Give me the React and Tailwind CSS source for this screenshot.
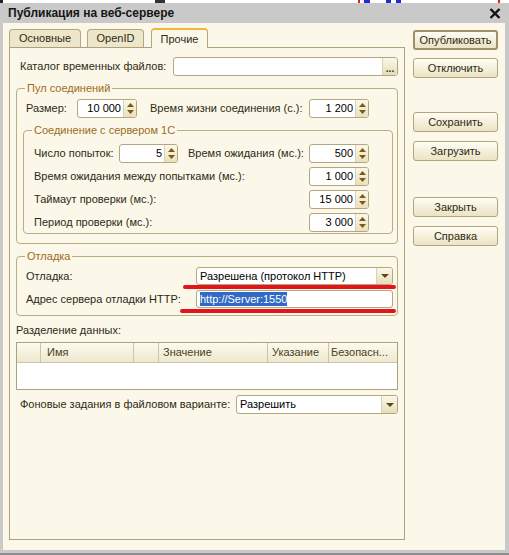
import React from "react";

const font = "font-['Liberation_Sans',Arial,sans-serif]";

function Up() {
  return (
    <svg width="7" height="4" viewBox="0 0 7 4"><path d="M0 4L3.5 0L7 4Z" fill="#7a5a14" /></svg>
  );
}
function Down() {
  return (
    <svg width="7" height="4" viewBox="0 0 7 4"><path d="M0 0L3.5 4L7 0Z" fill="#7a5a14" /></svg>
  );
}

function Spin({ value, w = "w-[60px]" }) {
  return (
    <div className={`${w} h-[19px] flex border border-[#b4a67d] rounded-[3px] bg-white overflow-hidden shrink-0`}>
      <div className="flex-1 text-right pr-[2px] leading-[17px] text-black">{value}</div>
      <div className="w-[13px] flex flex-col items-center justify-center gap-[3px] bg-gradient-to-b from-[#fbf8ea] to-[#e9e0bf] border-l border-[#ddd2ad]">
        <Up />
        <Down />
      </div>
    </div>
  );
}

function Select({ value, w, h = "h-[19px]", selected = false, arrow = true }) {
  return (
    <div className={`${w} ${h} flex border border-[#b4a67d] rounded-[3px] bg-white overflow-hidden shrink-0`}>
      <div className="flex-1 pl-[3px] flex items-center text-black">
        {selected ? (
          <span className="bg-[#316ac5] text-white leading-[14px]">{value}</span>
        ) : (
          <span>{value}</span>
        )}
      </div>
      {arrow && (
        <div className="w-[16px] flex items-center justify-center bg-gradient-to-b from-[#fbf8ea] to-[#e6ddbb] border-l border-[#ddd2ad]">
          <svg width="8" height="4" viewBox="0 0 8 4"><path d="M0 0L4 4L8 0Z" fill="#5e4914" /></svg>
        </div>
      )}
    </div>
  );
}

function Btn({ children, cls = "", def = false }) {
  return (
    <div
      className={`h-[20px] w-[85px] flex items-center justify-center rounded-[3px] bg-gradient-to-b from-[#fffdf4] to-[#ebe3c4] text-[#2d2a14] ${
        def ? "border-2 border-[#9e9168]" : "border border-[#b4a67b]"
      } ${cls}`}
    >
      {children}
    </div>
  );
}

export default function App() {
  return (
    <div className={`w-[509px] h-[555px] bg-white flex flex-col text-[11px] ${font}`}>
      <div className="h-[3px] flex shrink-0">
        <div className="w-[3px] bg-[#222]" />
        <div className="w-[152px]" />
        <div className="w-[10px] bg-[#333]" />
        <div className="w-[193px]" />
        <div className="w-[2px] bg-[#e02020]" />
        <div className="w-[4px]" />
        <div className="w-[6px] bg-[#2030d0]" />
        <div className="w-[16px]" />
        <div className="w-[5px] bg-[#2030d0]" />
        <div className="w-[5px]" />
        <div className="w-[5px] bg-[#2030d0]" />
        <div className="w-[97px]" />
        <div className="w-[2px] bg-[#e02020]" />
      </div>
      <div className="flex-1 flex flex-col bg-[#c9c9c9] border-b-2 border-[#8e8e8e] pl-[3px] pr-[4px] pb-[3px]">
        <div className="h-[20px] flex items-center justify-between pl-[5px] pr-[4px] shrink-0">
          <span className="font-bold text-[12px] text-[#151515]">Публикация на веб-сервере</span>
          <svg width="12" height="11" viewBox="0 0 12 11">
            <path d="M1.5 1L10.5 10M10.5 1L1.5 10" stroke="#111" strokeWidth="2.4" />
          </svg>
        </div>
        <div className="flex-1 bg-[#fbf8e9] flex text-[#2d2a14]">
          {/* left column */}
          <div className="w-[396px] ml-[6px] mt-[5px] mb-[10px] flex flex-col">
            <div className="h-[19px] flex items-end shrink-0">
              <div className="h-[18px] w-[72px] flex items-center justify-center border border-b-0 border-[#b4a67d] rounded-t-[4px] bg-[#ede6cb]">
                Основные
              </div>
              <div className="h-[18px] w-[57px] ml-[6px] flex items-center justify-center border border-b-0 border-[#b4a67d] rounded-t-[4px] bg-[#ede6cb]">
                OpenID
              </div>
              <div className="h-[20px] w-[57px] ml-[7px] -mb-px relative z-10 flex items-center justify-center border border-b-0 border-[#b4a67d] border-t-2 border-t-[#f2b540] rounded-t-[4px] bg-[#fbf8e9]">
                Прочие
              </div>
            </div>
            <div className="flex-1 border border-[#aca17b] bg-[#fbf8e9] px-[6px] pt-[9px] flex flex-col">
              {/* catalog */}
              <div className="flex items-center">
                <div className="w-[157px] pl-[4px]">Каталог временных файлов:</div>
                <div className="w-[225px] h-[19px] flex border border-[#b4a67d] rounded-[3px] bg-white overflow-hidden">
                  <div className="flex-1" />
                  <div className="w-[15px] flex items-end justify-center pb-[3px] bg-gradient-to-b from-[#fbf8ea] to-[#e6ddbb] border-l border-[#ddd2ad] text-[#333] leading-[6px] font-bold text-[10px]">
                    ...
                  </div>
                </div>
              </div>

              {/* Pool */}
              <fieldset className="mt-[5px] border border-[#b8ad86] rounded-[4px] pl-[9px] pr-[4px] pt-[4px] pb-[9px]">
                <legend className="ml-[-1px] px-[2px] leading-[14px] text-[#9e6b1c]">Пул соединений</legend>
                <div className="flex items-center">
                  <div className="w-[51px]">Размер:</div>
                  <Spin value="10 000" />
                  <div className="w-[159px] ml-[13px]">Время жизни соединения (с.):</div>
                  <Spin value="1 200" />
                </div>
                <fieldset className="mt-[5px] ml-[-3px] border border-[#b8ad86] rounded-[4px] pl-[10px] pt-[7px] pb-[1px]">
                  <legend className="ml-[-2px] px-[2px] leading-[14px] text-[#9e6b1c]">Соединение с сервером 1С</legend>
                  <div className="flex flex-col gap-[4px]">
                    <div className="flex items-center">
                      <div className="w-[85px]">Число попыток:</div>
                      <Spin value="5" w="w-[59px]" />
                      <div className="w-[131px] pl-[10px]">Время ожидания (мс.):</div>
                      <Spin value="500" />
                    </div>
                    <div className="flex items-center">
                      <div className="w-[275px]">Время ожидания между попытками (мс.):</div>
                      <Spin value="1 000" />
                    </div>
                    <div className="flex items-center">
                      <div className="w-[275px]">Таймаут проверки (мс.):</div>
                      <Spin value="15 000" />
                    </div>
                    <div className="flex items-center">
                      <div className="w-[275px]">Период проверки (мс.):</div>
                      <Spin value="3 000" />
                    </div>
                  </div>
                </fieldset>
              </fieldset>

              {/* Debug */}
              <fieldset className="relative mt-[5px] border border-[#b8ad86] rounded-[4px] pl-[9px] pt-[4px] pb-[7px]">
                <legend className="ml-[-1px] px-[2px] leading-[14px] text-[#9e6b1c]">Отладка</legend>
                <div className="flex flex-col gap-[5px]">
                  <div className="flex items-center">
                    <div className="w-[170px]">Отладка:</div>
                    <Select value="Разрешена (протокол HTTP)" w="w-[197px]" h="h-[18px]" />
                  </div>
                  <div className="flex items-center">
                    <div className="w-[170px]">Адрес сервера отладки HTTP:</div>
                    <Select value="http://Server:1550" w="w-[197px]" h="h-[18px]" selected arrow={false} />
                  </div>
                </div>
                <div className="absolute left-[166px] top-[22px] w-[213px] h-[4px] rounded-full bg-[#e3141b]" />
                <div className="absolute left-[163px] top-[46px] w-[216px] h-[4px] rounded-full bg-[#e3141b]" />
              </fieldset>

              <div className="mt-[7px] leading-[14px]">Разделение данных:</div>
              <div className="mt-[5px] h-[48px] border border-[#aca17b] bg-white flex flex-col">
                <div className="h-[20px] flex border-b border-[#cfc5a0] bg-gradient-to-b from-[#fcfaf0] to-[#efe8cf] text-[#4a4020]">
                  <div className="w-[24px] border-r border-[#cfc5a0]" />
                  <div className="w-[93px] border-r border-[#cfc5a0] pl-[6px] flex items-center">Имя</div>
                  <div className="w-[25px] border-r border-[#cfc5a0]" />
                  <div className="w-[109px] border-r border-[#cfc5a0] pl-[4px] flex items-center">Значение</div>
                  <div className="w-[61px] border-r border-[#cfc5a0] pl-[4px] flex items-center">Указание</div>
                  <div className="flex-1 pl-[2px] flex items-center">Безопасн...</div>
                </div>
              </div>

              <div className="mt-[5px] flex items-center">
                <div className="w-[220px] pl-[4px]">Фоновые задания в файловом варианте:</div>
                <Select value="Разрешить" w="w-[162px]" />
              </div>
            </div>
          </div>

          {/* right column */}
          <div className="ml-[8px] flex flex-col">
            <Btn def cls="mt-[7px]">Опубликовать</Btn>
            <Btn cls="mt-[8px]">Отключить</Btn>
            <Btn cls="mt-[34px]">Сохранить</Btn>
            <Btn cls="mt-[9px]">Загрузить</Btn>
            <Btn cls="mt-[36px]">Закрыть</Btn>
            <Btn cls="mt-[9px]">Справка</Btn>
          </div>
        </div>
      </div>
    </div>
  );
}
